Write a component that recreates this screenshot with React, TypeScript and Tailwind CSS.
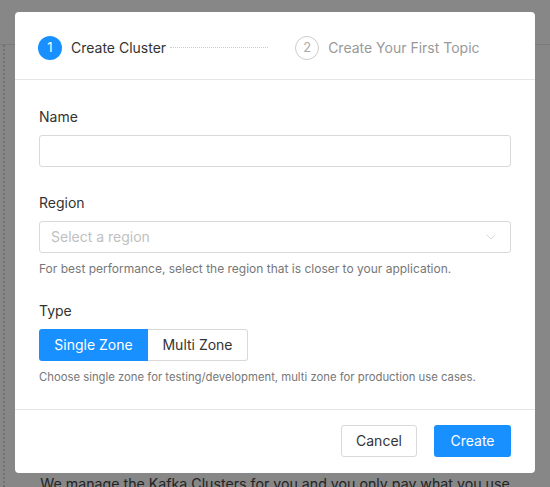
import React from 'react';
import { ChevronDown } from 'lucide-react';

const font = { fontFamily: 'Inter, "Noto Sans", sans-serif' };

export default function App() {
  return (
    <div className="relative h-[487px] w-[550px] overflow-hidden bg-white" style={font}>
      {/* page behind the dialog */}
      <div className="flex h-full flex-col">
        <div className="h-[45px] border-b border-gray-200" />
        <div className="ml-[3px] flex-1 border-l-2 border-dotted border-gray-300" />
        <p className="-mt-[14px] h-[14px] text-center text-[14.2px] leading-[22px] text-[#444]">
          We manage the Kafka Clusters for you and you only pay what you use
        </p>
      </div>

      {/* overlay + dialog */}
      <div className="absolute inset-0 bg-black/[0.47] px-[15px] pt-[12px]">
        <div className="rounded bg-white text-sm text-[#333]">
          <div className="flex h-[68px] items-center border-b border-[#e5e5e5] px-[23px] pt-[4px]">
            <div className="flex items-center">
              <span className="flex h-[24px] w-[24px] items-center justify-center rounded-full bg-[#1890ff] text-[13px] text-white">1</span>
              <span className="ml-[9px] text-[14px] text-[#333]">Create Cluster</span>
            </div>
            <div className="ml-[4px] h-0 w-[98px] border-t border-dotted border-[#ccc]" />
            <div className="ml-[27px] flex items-center">
              <span className="flex h-[24px] w-[24px] items-center justify-center rounded-full border border-[#ccc] text-[13px] text-[#aaa]">2</span>
              <span className="ml-[9px] text-[14px] text-[#999]">Create Your First Topic</span>
            </div>
          </div>

          <div className="px-[24px] pt-[26px] pb-[22px]">
            <label className="block text-[14px] leading-[22px] text-[#333]">Name</label>
            <div className="mt-[7px] h-[32px] rounded-[3px] border border-[#d9d9d9]" />

            <label className="mt-[25px] block text-[14px] leading-[22px] text-[#333]">Region</label>
            <div className="mt-[7px] flex h-[32px] items-center justify-between rounded-[3px] border border-[#d9d9d9] px-[11px]">
              <span className="text-[14px] text-[#bfbfbf]">Select a region</span>
              <ChevronDown className="h-[16px] w-[16px] text-[#c4c4c4]" strokeWidth={1.1} />
            </div>
            <p className="mt-[6px] text-[12px] leading-[20px] text-[#777]">
              For best performance, select the region that is closer to your application.
            </p>

            <label className="mt-[21px] block text-[14px] leading-[22px] text-[#333]">Type</label>
            <div className="mt-[7px] flex">
              <button className="h-[32px] w-[109px] rounded-l-[3px] bg-[#1890ff] text-[14px] text-white">Single Zone</button>
              <button className="h-[32px] w-[100px] rounded-r-[3px] border border-l-0 border-[#d9d9d9] text-[14px] text-[#333]">Multi Zone</button>
            </div>
            <p className="mt-[6px] text-[11.3px] leading-[20px] text-[#777]">
              Choose single zone for testing/development, multi zone for production use cases.
            </p>
          </div>

          <div className="flex h-[64px] items-center justify-end gap-[17px] border-t border-[#e5e5e5] px-[24px] pb-[1px]">
            <button className="h-[32px] w-[76px] rounded-[3px] border border-[#d9d9d9] text-[14px] text-[#333]">Cancel</button>
            <button className="h-[32px] w-[77px] rounded-[3px] bg-[#1890ff] text-[14px] text-white">Create</button>
          </div>
        </div>
      </div>
    </div>
  );
}
